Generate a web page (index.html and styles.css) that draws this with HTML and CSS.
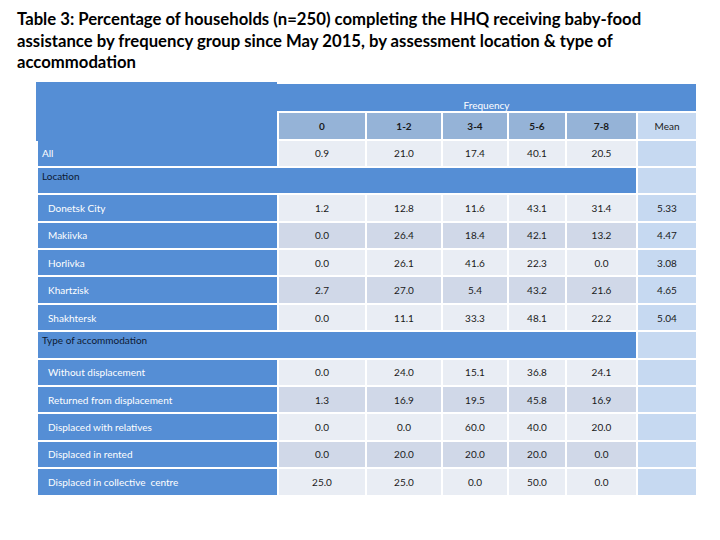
FILE: index.html
```html
<!DOCTYPE html>
<html>
<head>
<meta charset="utf-8">
<link rel="stylesheet" href="styles.css">
</head>
<body>
<h1 class="title">Table 3: Percentage of households (n=250) completing the HHQ receiving <span class="nowrap">baby-food</span> assistance by frequency group since May 2015, by assessment location &amp; type of accommodation</h1>
<div class="table">
  <div class="corner"></div>
  <div class="freq">Frequency</div>
  <div class="ch">0</div><div class="ch">1-2</div><div class="ch">3-4</div><div class="ch">5-6</div><div class="ch">7-8</div><div class="ch mean-h">Mean</div>

  <div class="lab top">All</div>
  <div class="v a">0.9</div><div class="v a">21.0</div><div class="v a">17.4</div><div class="v a">40.1</div><div class="v a">20.5</div><div class="v m"></div>

  <div class="sec">Location</div><div class="v m"></div>

  <div class="lab">Donetsk City</div>
  <div class="v a">1.2</div><div class="v a">12.8</div><div class="v a">11.6</div><div class="v a">43.1</div><div class="v a">31.4</div><div class="v m">5.33</div>
  <div class="lab">Makiivka</div>
  <div class="v b">0.0</div><div class="v b">26.4</div><div class="v b">18.4</div><div class="v b">42.1</div><div class="v b">13.2</div><div class="v m">4.47</div>
  <div class="lab">Horlivka</div>
  <div class="v a">0.0</div><div class="v a">26.1</div><div class="v a">41.6</div><div class="v a">22.3</div><div class="v a">0.0</div><div class="v m">3.08</div>
  <div class="lab">Khartzisk</div>
  <div class="v b">2.7</div><div class="v b">27.0</div><div class="v b">5.4</div><div class="v b">43.2</div><div class="v b">21.6</div><div class="v m">4.65</div>
  <div class="lab">Shakhtersk</div>
  <div class="v a">0.0</div><div class="v a">11.1</div><div class="v a">33.3</div><div class="v a">48.1</div><div class="v a">22.2</div><div class="v m">5.04</div>

  <div class="sec">Type of accommodation</div><div class="v m"></div>

  <div class="lab">Without displacement</div>
  <div class="v a">0.0</div><div class="v a">24.0</div><div class="v a">15.1</div><div class="v a">36.8</div><div class="v a">24.1</div><div class="v m"></div>
  <div class="lab">Returned from displacement</div>
  <div class="v b">1.3</div><div class="v b">16.9</div><div class="v b">19.5</div><div class="v b">45.8</div><div class="v b">16.9</div><div class="v m"></div>
  <div class="lab">Displaced with relatives</div>
  <div class="v a">0.0</div><div class="v a">0.0</div><div class="v a">60.0</div><div class="v a">40.0</div><div class="v a">20.0</div><div class="v m"></div>
  <div class="lab">Displaced in rented</div>
  <div class="v b">0.0</div><div class="v b">20.0</div><div class="v b">20.0</div><div class="v b">20.0</div><div class="v b">0.0</div><div class="v m"></div>
  <div class="lab">Displaced in collective&nbsp; centre</div>
  <div class="v a">25.0</div><div class="v a">25.0</div><div class="v a">0.0</div><div class="v a">50.0</div><div class="v a">0.0</div><div class="v m"></div>
</div>
</body>
</html>
```
FILE: styles.css
```css
html, body {
  margin: 0;
  padding: 0;
  background: #ffffff;
}
body {
  font-family: Lato, "Liberation Sans", sans-serif;
  color: #000;
}
.title {
  margin: 0;
  width: 640px;
  padding: 9px 0 0 17px;
  font-size: 16.7px;
  font-weight: 700;
  line-height: 21.5px;
  color: #000;
}
.nowrap {
  white-space: nowrap;
}
.table {
  margin: 10px 0 0 38px;
  display: grid;
  grid-template-columns: 239px 86px 74px 64px 56px 69px 58px;
  grid-template-rows: 27px 26px;
  grid-auto-rows: 25.4px;
  column-gap: 2px;
  row-gap: 2px;
  font-size: 10px;
  width: 659px;
}
.corner {
  grid-column: 1;
  grid-row: 1 / span 2;
  background: #558ed5;
  margin: -2px 0 -2px -2px;
}
.freq {
  grid-column: 2 / span 6;
  background: #558ed5;
  color: #ffffff;
  display: flex;
  align-items: flex-end;
  justify-content: center;
  padding-bottom: 0;
  margin-left: -2px;
}
.ch {
  background: #95b3d7;
  font-weight: 700;
  color: #1a1a1a;
  display: flex;
  align-items: center;
  justify-content: center;
}
.mean-h {
  background: #c6d9f1;
  font-weight: 400;
  color: #222;
}
.lab {
  background: #558ed5;
  color: #ffffff;
  display: flex;
  align-items: center;
  padding-left: 10px;
}
.lab.top {
  padding-left: 4px;
}
.sec {
  grid-column: 1 / span 6;
  background: #558ed5;
  color: #0d1a33;
  padding: 2px 0 0 4px;
}
.v {
  display: flex;
  align-items: center;
  justify-content: center;
  color: #1a1a1a;
}
.a { background: #e9edf4; }
.b { background: #d0d8e8; }
.m { background: #c6d9f1; }
```
